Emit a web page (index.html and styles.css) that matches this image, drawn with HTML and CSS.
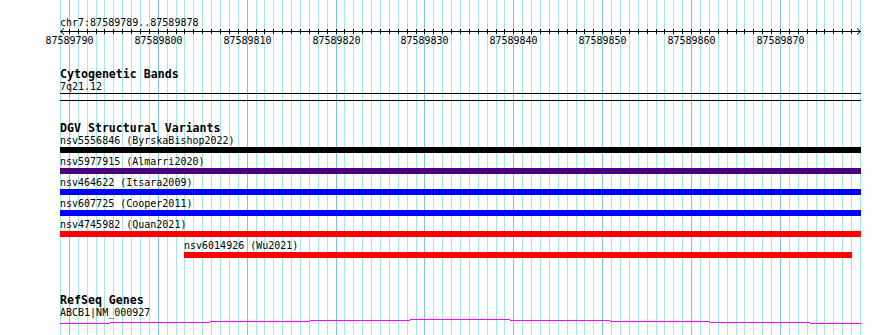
FILE: index.html
```html
<!DOCTYPE html>
<html>
<head>
<meta charset="utf-8">
<title>chr7:87589789..87589878</title>
<link rel="stylesheet" href="styles.css">
</head>
<body>
<svg id="grid" class="grid" width="890" height="335"></svg>
<div class="view">
	<div class="loc">chr7:87589789..87589878</div>
	<svg id="ruler" class="ruler" width="890" height="20"></svg>

	<div class="track cyto">
		<div class="title">Cytogenetic Bands</div>
		<div class="label">7q21.12</div>
		<div class="band"></div>
	</div>

	<div class="track dgv">
		<div class="title">DGV Structural Variants</div>
		<div class="feat">
			<div class="label">nsv5556846 (ByrskaBishop2022)</div>
			<div class="bar black" style="width:801px"></div>
		</div>
		<div class="feat">
			<div class="label">nsv5977915 (Almarri2020)</div>
			<div class="bar purple" style="width:801px"></div>
		</div>
		<div class="feat">
			<div class="label">nsv464622 (Itsara2009)</div>
			<div class="bar blue" style="width:801px"></div>
		</div>
		<div class="feat">
			<div class="label">nsv607725 (Cooper2011)</div>
			<div class="bar blue" style="width:801px"></div>
		</div>
		<div class="feat">
			<div class="label">nsv4745982 (Quan2021)</div>
			<div class="bar red" style="width:801px"></div>
		</div>
		<div class="feat" style="margin-left:124px">
			<div class="label">nsv6014926 (Wu2021)</div>
			<div class="bar red" style="width:668px"></div>
		</div>
	</div>

	<div class="track refseq">
		<div class="title">RefSeq Genes</div>
		<div class="label gene-label">ABCB1|NM_000927</div>
		<svg class="gene" width="801" height="8">
			<rect x="0" y="5" width="50" height="1" />
			<rect x="50" y="4" width="100" height="1" />
			<rect x="150" y="3" width="100" height="1" />
			<rect x="250" y="2" width="100" height="1" />
			<rect x="350" y="1" width="100" height="1" />
			<rect x="450" y="2" width="100" height="1" />
			<rect x="550" y="3" width="100" height="1" />
			<rect x="650" y="4" width="100" height="1" />
			<rect x="750" y="5" width="51" height="1" />
		</svg>
	</div>
</div>
<script src="script.js"></script>
</body>
</html>
```

FILE: styles.css
```css
*{ margin:0; padding:0;}
body{ width:890px; height:335px; overflow:hidden; position:relative; background:#fff; color:#000; font-family:"DejaVu Sans Mono", monospace; font-size:10px;}
.grid{ position:absolute; left:0; top:0;}
.view{ position:relative; padding-top:17px;}
.loc{ padding-left:60px; height:11px; line-height:12px; white-space:nowrap;}
.ruler{ display:block;}
.ruler text{ font-family:"DejaVu Sans Mono", monospace; font-size:10px;}
.track{ padding-left:60px;}
.title{ font-weight:bold; font-size:11.6px; line-height:14px; white-space:nowrap;}
.label{ line-height:12px; white-space:nowrap;}
.cyto{ margin-top:19px;}
.band{ width:801px; height:6px; border-top:1px solid #000; border-bottom:1px solid #000;}
.dgv{ margin-top:20px;}
.feat{ margin-bottom:3px;}
.bar{ height:6px;}
.black{ background:#000;}
.purple{ background:#4b0082;}
.blue{ background:#0000ff;}
.red{ background:#ff0000;}
.refseq{ margin-top:35px;}
.gene-label{ line-height:11px;}
.gene{ display:block; shape-rendering:crispEdges;}
.gene rect{ fill:#ff00ff;}
```

FILE: script.js
```js
var ns = 'http://www.w3.org/2000/svg';
var step = 800 / 90;
var start = 87589789;

function add(parent, name, attrs){
    var node = document.createElementNS(ns, name);
    for (var k in attrs) node.setAttribute(k, attrs[k]);
    parent.appendChild(node);
    return node;
}

var grid = document.getElementById('grid');
var ruler = document.getElementById('ruler');
grid.setAttribute('shape-rendering', 'crispEdges');

for (var i = 0; i <= 90; i++) {
    var x = Math.round(60 + i * step);
    add(grid, 'rect', { x: x, y: 0, width: 1, height: 335, fill: (i % 10 == 1) ? '#7cc3ea' : '#a0e8ee' });
    if (i > 0 && i < 90) {
        add(ruler, 'rect', { x: x, y: 1, width: 1, height: 5, fill: '#000', 'shape-rendering': 'crispEdges' });
    }
    if (i % 10 == 1) {
        var t = add(ruler, 'text', { x: x + 0.5, y: 16, 'text-anchor': 'middle' });
        t.textContent = start + i;
    }
}

// axis line and arrow heads
add(ruler, 'rect', { x: 60, y: 3, width: 801, height: 1, fill: '#000', 'shape-rendering': 'crispEdges' });
add(ruler, 'polyline', { points: '64,0.5 60.5,3.5 64,6.5', fill: 'none', stroke: '#000', 'stroke-width': 1 });
add(ruler, 'polyline', { points: '857,0.5 860.5,3.5 857,6.5', fill: 'none', stroke: '#000', 'stroke-width': 1 });
```
